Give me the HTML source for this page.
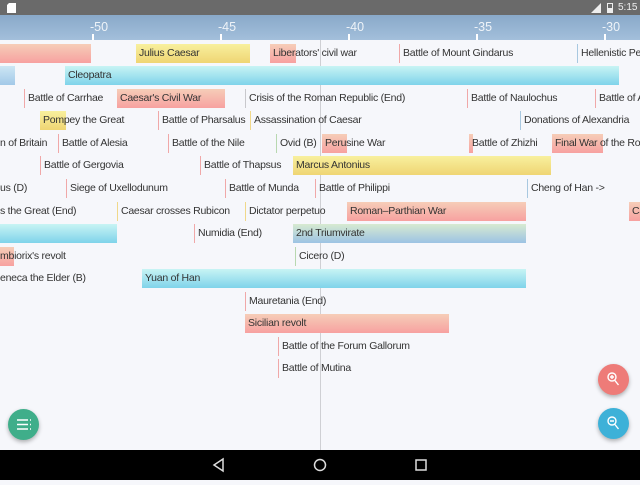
<!DOCTYPE html>
<html><head><meta charset="utf-8"><style>
*{margin:0;padding:0;box-sizing:border-box}
body{width:640px;height:480px;overflow:hidden;background:#f6f7fb;font-family:"Liberation Sans",sans-serif;position:relative}
#sb{position:absolute;left:0;top:0;width:640px;height:15px;background:#6a6a6a}
#ax{position:absolute;left:0;top:15px;width:640px;height:25px;background:linear-gradient(#89a9c9,#a3bfdb)}
.tl{position:absolute;top:5px;font-size:12.5px;color:#eef3f8}
.tk{position:absolute;top:19px;width:2px;height:6px;background:#fff}
#cl{position:absolute;left:320px;top:40px;width:1px;height:410px;background:#cfd0d4}
.r{position:absolute;height:19px;line-height:19px;font-size:10.5px;letter-spacing:-0.25px;color:#333;white-space:nowrap}
.b{padding-left:3px;overflow:visible}
.pk{background:linear-gradient(#f6cdb8,#f7a1a0)}
.ye{background:linear-gradient(#f8f09e,#efd573)}
.cy{background:linear-gradient(#c8f4f4,#7fd3ea)}
.bl{background:linear-gradient(#d7ead0,#9cc3e3)}
.lb{background:linear-gradient(#cde6f4,#a2c9e8)}
.e{border-left:1px solid #f0a8a8;padding-left:3px}
.e.g{border-left-color:#c8c8cc}.e.y{border-left-color:#f0d88a}.e.u{border-left-color:#a8c8e0}.e.n{border-left-color:#b8d8b0}
#nav{position:absolute;left:0;top:450px;width:640px;height:30px;background:#000}
.fab{position:absolute;width:31px;height:31px;border-radius:50%;box-shadow:0 2px 4px rgba(0,0,0,.3)}
</style></head><body>
<div id="sb"></div>
<svg style="position:absolute;left:7px;top:3px" width="9" height="10"><path d="M2 0H9V10H0V2Z" fill="#fff"/></svg>
<svg style="position:absolute;left:591px;top:3px" width="10" height="10"><path d="M10 0V10H0Z" fill="#eee"/></svg>
<svg style="position:absolute;left:607px;top:2px" width="6" height="11"><rect x="0.5" y="1.5" width="5" height="9" fill="none" stroke="#eee"/><rect x="1" y="6" width="4" height="4" fill="#eee"/></svg>
<div style="position:absolute;left:618px;top:2px;font-size:10px;color:#eee">5:15</div>
<div id="ax">
<div class="tl" style="left:90px">-50</div><div class="tk" style="left:92px"></div>
<div class="tl" style="left:218px">-45</div><div class="tk" style="left:220px"></div>
<div class="tl" style="left:346px">-40</div><div class="tk" style="left:348px"></div>
<div class="tl" style="left:474px">-35</div><div class="tk" style="left:476px"></div>
<div class="tl" style="left:602px">-30</div><div class="tk" style="left:604px"></div>
</div>
<div id="cl"></div>

<div class="r b pk" style="left:0;top:44px;width:91px"></div>
<div class="r b ye" style="left:136px;top:44px;width:114px">Julius Caesar</div>
<div class="r b pk" style="left:270px;top:44px;width:26px">Liberators' civil war</div>
<div class="r e" style="left:399px;top:44px">Battle of Mount Gindarus</div>
<div class="r e u" style="left:577px;top:44px">Hellenistic Pe</div>

<div class="r b lb" style="left:0;top:66px;width:15px"></div>
<div class="r b cy" style="left:65px;top:66px;width:554px">Cleopatra</div>

<div class="r e" style="left:24px;top:89px">Battle of Carrhae</div>
<div class="r b pk" style="left:117px;top:89px;width:108px">Caesar's Civil War</div>
<div class="r e g" style="left:245px;top:89px">Crisis of the Roman Republic (End)</div>
<div class="r e" style="left:467px;top:89px">Battle of Naulochus</div>
<div class="r e" style="left:595px;top:89px">Battle of A</div>

<div class="r b ye" style="left:40px;top:111px;width:26px">Pompey the Great</div>
<div class="r e" style="left:158px;top:111px">Battle of Pharsalus</div>
<div class="r e y" style="left:250px;top:111px">Assassination of Caesar</div>
<div class="r e u" style="left:520px;top:111px">Donations of Alexandria</div>

<div class="r" style="left:0;top:134px">n of Britain</div>
<div class="r e" style="left:58px;top:134px">Battle of Alesia</div>
<div class="r e" style="left:168px;top:134px">Battle of the Nile</div>
<div class="r e n" style="left:276px;top:134px">Ovid (B)</div>
<div class="r b pk" style="left:322px;top:134px;width:25px">Perusine War</div>
<div class="r b pk" style="left:469px;top:134px;width:4px">Battle of Zhizhi</div>
<div class="r b pk" style="left:552px;top:134px;width:51px">Final War of the Ro</div>

<div class="r e" style="left:40px;top:156px">Battle of Gergovia</div>
<div class="r e" style="left:200px;top:156px">Battle of Thapsus</div>
<div class="r b ye" style="left:293px;top:156px;width:258px">Marcus Antonius</div>

<div class="r" style="left:0;top:179px">us (D)</div>
<div class="r e" style="left:66px;top:179px">Siege of Uxellodunum</div>
<div class="r e" style="left:225px;top:179px">Battle of Munda</div>
<div class="r e" style="left:315px;top:179px">Battle of Philippi</div>
<div class="r e u" style="left:527px;top:179px">Cheng of Han -&gt;</div>

<div class="r" style="left:0;top:202px">s the Great (End)</div>
<div class="r e y" style="left:117px;top:202px">Caesar crosses Rubicon</div>
<div class="r e y" style="left:245px;top:202px">Dictator perpetuo</div>
<div class="r b pk" style="left:347px;top:202px;width:179px">Roman–Parthian War</div>
<div class="r b pk" style="left:629px;top:202px;width:11px">Ca</div>

<div class="r b cy" style="left:0;top:224px;width:117px"></div>
<div class="r e" style="left:194px;top:224px">Numidia (End)</div>
<div class="r b bl" style="left:293px;top:224px;width:233px">2nd Triumvirate</div>

<div class="r b pk" style="left:0;top:247px;width:14px;padding-left:0">mbiorix's revolt</div>
<div class="r e n" style="left:295px;top:247px">Cicero (D)</div>

<div class="r" style="left:0;top:269px">eneca the Elder (B)</div>
<div class="r b cy" style="left:142px;top:269px;width:384px">Yuan of Han</div>

<div class="r e" style="left:245px;top:292px">Mauretania (End)</div>

<div class="r b pk" style="left:245px;top:314px;width:204px">Sicilian revolt</div>

<div class="r e" style="left:278px;top:337px">Battle of the Forum Gallorum</div>

<div class="r e" style="left:278px;top:359px">Battle of Mutina</div>

<div class="fab" style="left:8px;top:409px;background:#3fae8a"><svg width="31" height="31"><g stroke="#fff" stroke-width="1.5"><path d="M9 11H20M9 15.5H20M9 20H20"/><path d="M22 11h1M22 15.5h1M22 20h1"/></g></svg></div>
<div class="fab" style="left:598px;top:364px;background:#ee7b78"><svg width="31" height="31"><g stroke="#fff" stroke-width="1.4" fill="none"><circle cx="14" cy="13" r="4"/><path d="M16.5 16l4 5M12 13h4M14 11v4"/></g></svg></div>
<div class="fab" style="left:598px;top:408px;background:#3db1d8"><svg width="31" height="31"><g stroke="#fff" stroke-width="1.4" fill="none"><circle cx="14" cy="13" r="4"/><path d="M16.5 16l4 5M12 13h4"/></g></svg></div>

<div id="nav"><svg width="640" height="30"><g stroke="#ddd" stroke-width="1.5" fill="none"><path d="M223 9L214 15L223 21Z"/><circle cx="320" cy="15" r="5.5"/><rect x="416" y="10" width="10" height="10"/></g></svg></div>
</body></html>
